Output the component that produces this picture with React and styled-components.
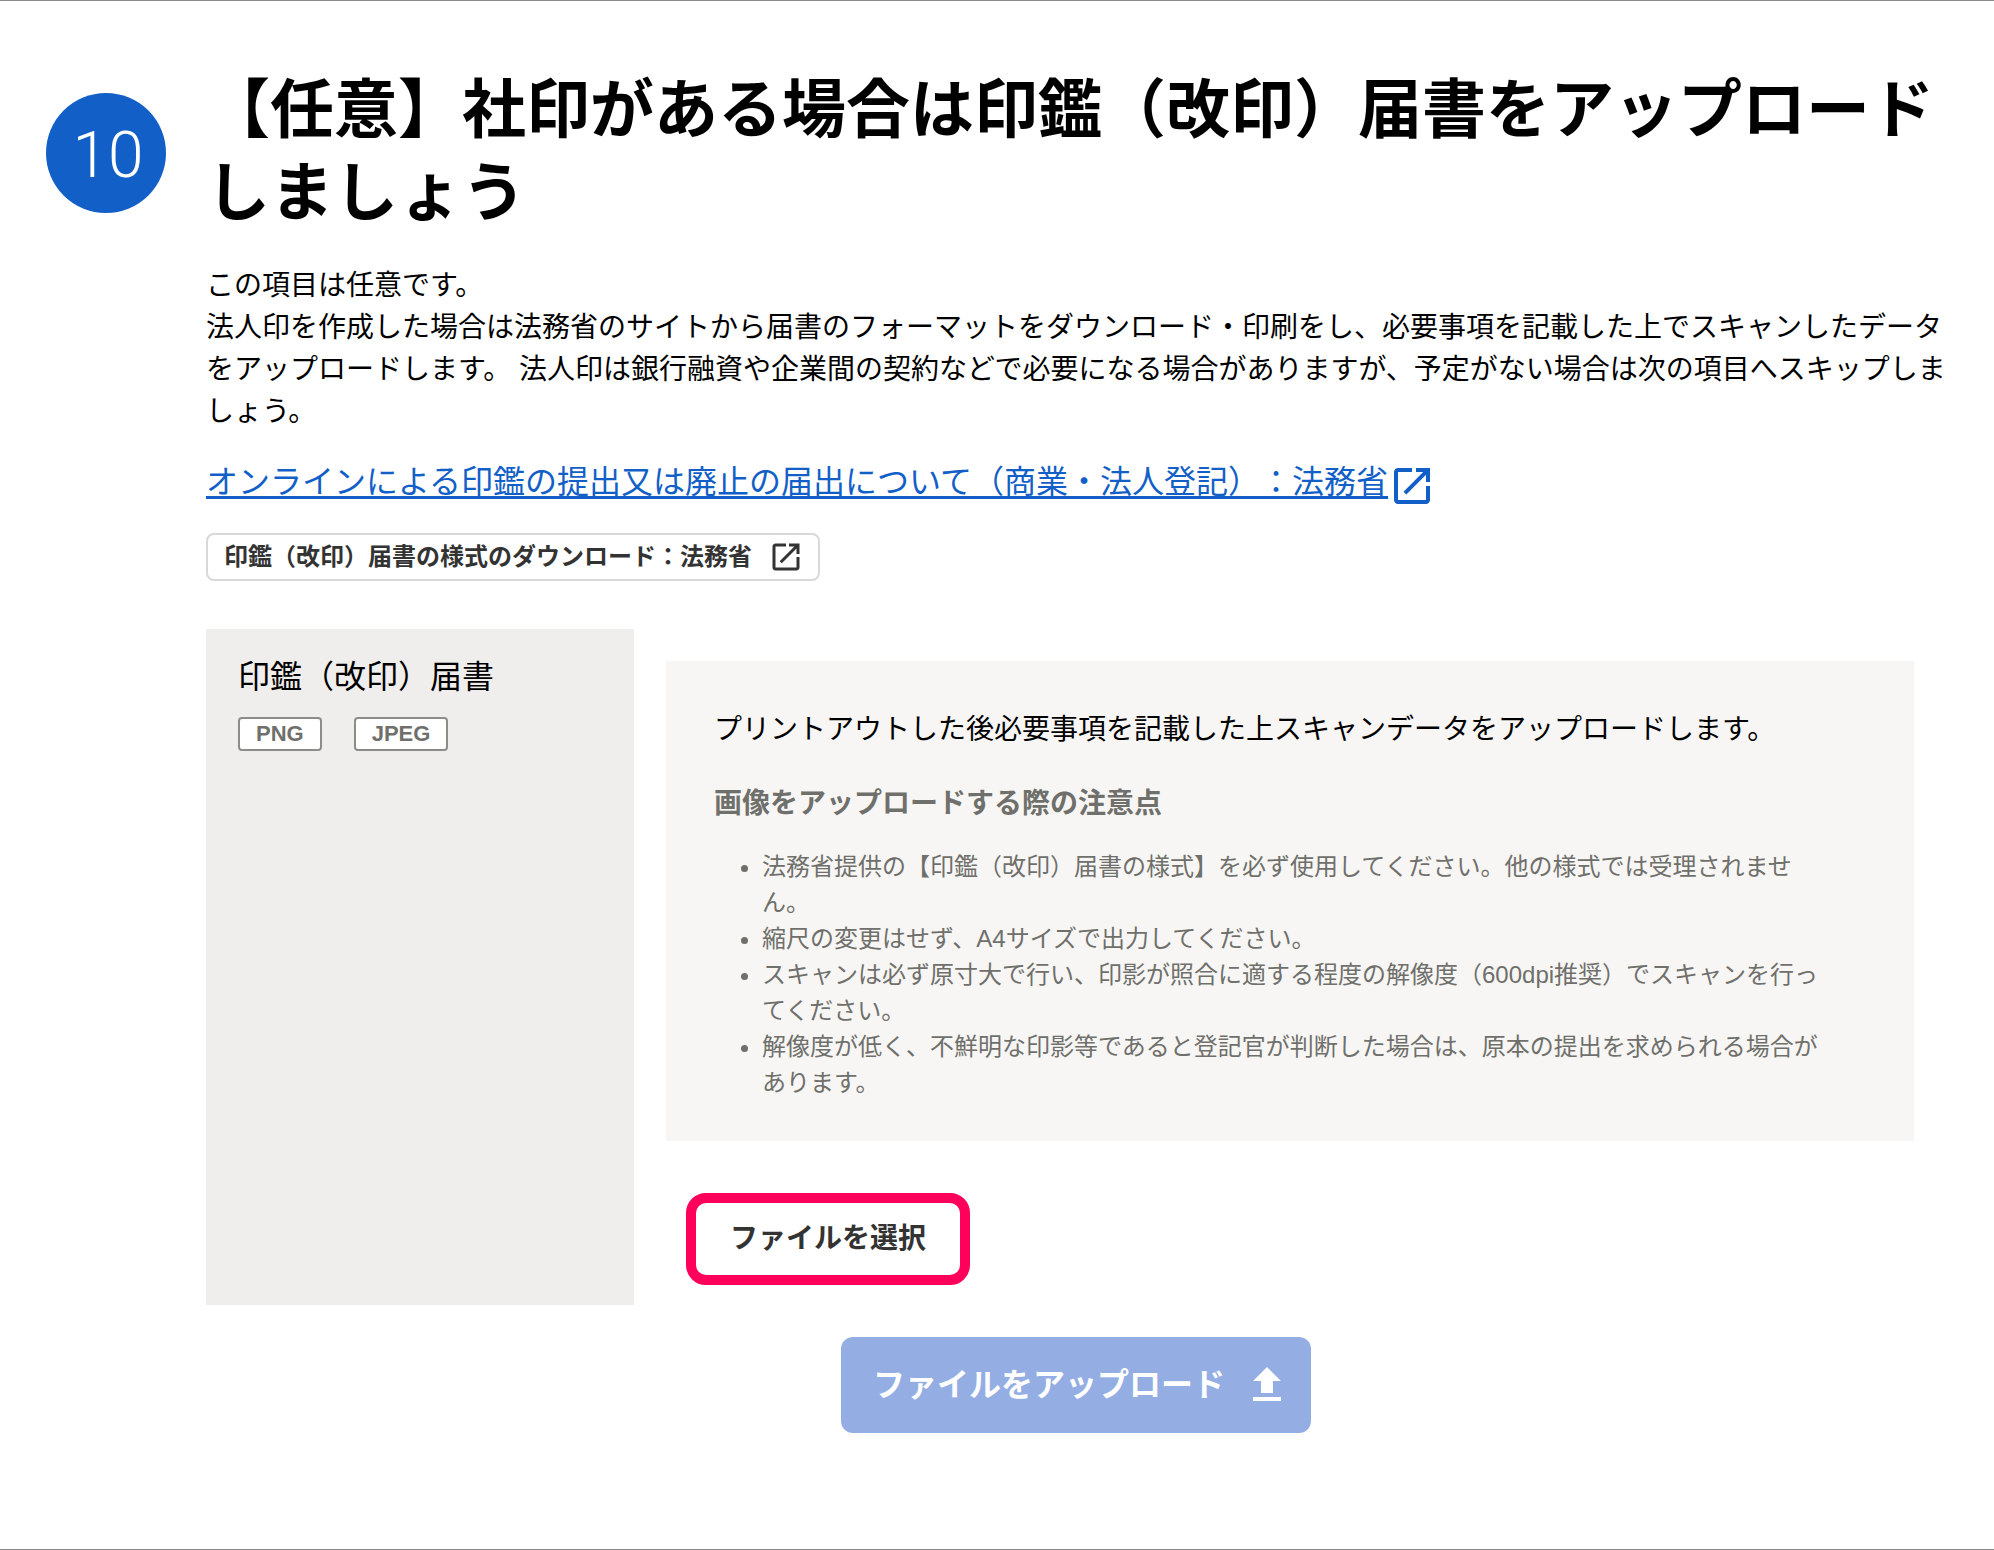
import React, { useRef } from 'react';
import styled, { createGlobalStyle } from 'styled-components';

const color = {
  text: '#000000',
  strong: '#333333',
  muted: '#6f6f6b',
  link: '#135fc8',
  rule: '#8a8a8a',
  outline: '#d9d9d9',
  panel: '#efeeec',
  card: '#f7f6f4',
  focus: '#ff005a',
  disabled: '#94aee4',
};

const GlobalStyle = createGlobalStyle`
  * { box-sizing: border-box; }
  body {
    margin: 0;
    background: #ffffff;
    color: ${color.text};
    font-family: "Liberation Sans", "Noto Sans CJK JP", sans-serif;
    font-size: 28px;
    line-height: 42px;
    text-spacing-trim: space-all;
  }
`;

const Step = styled.section`
  display: flex;
  align-items: flex-start;
  gap: 40px;
  padding: 68px 48px 116px 46px;
  border-top: 1px solid ${color.rule};
  border-bottom: 1px solid ${color.rule};
`;

const StepNumber = styled.span`
  flex: none;
  display: flex;
  align-items: center;
  justify-content: center;
  width: 120px;
  height: 120px;
  margin-top: 24px;
  padding: 6px 0 0 4px;
  border-radius: 50%;
  background: ${color.link};
  color: #ffffff;
  font-family: Roboto, sans-serif;
  font-size: 64px;
  font-weight: 300;
`;

const StepBody = styled.div`
  flex: 1;
  min-width: 0;
`;

const Title = styled.h2`
  margin: 0 0 30px;
  font-size: 64px;
  line-height: 83px;
`;

const Lead = styled.p`
  margin: 0;
`;

const Links = styled.div`
  display: flex;
  flex-direction: column;
  align-items: flex-start;
  gap: 27px;
  margin: 25px 0 48px;
`;

const TextLink = styled.a`
  display: flex;
  align-items: flex-end;
  gap: 4px;
  color: ${color.link};
  font-size: 32px;
  line-height: 48px;
  text-decoration: none;

  span {
    text-decoration: underline;
    text-decoration-thickness: 3px;
    text-decoration-skip-ink: none;
    text-underline-offset: 3px;
  }
`;

const DownloadLink = styled.a`
  display: flex;
  align-items: center;
  gap: 16px;
  height: 48px;
  padding: 0 14px 0 16px;
  border: 2px solid ${color.outline};
  border-radius: 8px;
  background: #ffffff;
  color: ${color.strong};
  font-size: 24px;
  font-weight: 700;
  text-decoration: none;
`;

const Document = styled.div`
  display: grid;
  grid-template-columns: 428px 1fr;
  gap: 32px;
`;

const DocumentInfo = styled.div`
  padding: 24px 32px;
  background: ${color.panel};
`;

const DocumentName = styled.h3`
  margin: 0 0 16px;
  font-size: 32px;
  font-weight: 400;
  line-height: 48px;
`;

const Formats = styled.ul`
  display: flex;
  gap: 32px;
  margin: 0;
  padding: 0;
  list-style: none;
`;

const Format = styled.li`
  padding: 0 16px;
  border: 2px solid #8c8c88;
  border-radius: 4px;
  background: #ffffff;
  color: ${color.muted};
  font-size: 22px;
  font-weight: 700;
  line-height: 30px;
`;

const DocumentMain = styled.div`
  padding: 32px 32px 20px 0;
`;

const Guide = styled.div`
  padding: 48px 48px 40px;
  background: ${color.card};
`;

const GuideTitle = styled.h4`
  margin: 32px 0 24px;
  color: ${color.muted};
  font-size: 28px;
`;

const Notes = styled.ul`
  margin: 0;
  padding: 0 40px 0 48px;
  color: ${color.muted};
  font-size: 24px;
  line-height: 36px;
`;

const SelectButton = styled.button`
  display: block;
  height: 92px;
  margin: 52px 0 0 20px;
  padding: 0 34px;
  border: 10px solid ${color.focus};
  border-radius: 20px;
  background: #ffffff;
  color: ${color.strong};
  font: inherit;
  font-weight: 700;
`;

const FileInput = styled.input`
  display: none;
`;

const Actions = styled.div`
  display: flex;
  justify-content: center;
  margin-top: 32px;
`;

const UploadButton = styled.button`
  display: flex;
  align-items: center;
  gap: 18px;
  height: 96px;
  padding: 0 20px 0 32px;
  border: 0;
  border-radius: 12px;
  background: ${color.disabled};
  color: #ffffff;
  font: inherit;
  font-size: 32px;
  font-weight: 700;
`;

const Icon = styled.svg`
  flex: none;
  display: block;
  width: ${(p) => p.$size}px;
  height: ${(p) => p.$size}px;
  fill: currentColor;
`;

const OpenInNew = ({ size, viewBox }) => (
  <Icon $size={size} viewBox={viewBox} aria-hidden="true">
    <path d="M19 19H5V5h7V3H5c-1.11 0-2 .9-2 2v14c0 1.1.89 2 2 2h14c1.1 0 2-.9 2-2v-7h-2v7zM14 3v2h3.59l-9.83 9.83 1.41 1.41L19 6.41V10h2V3h-7z" />
  </Icon>
);

const notes = [
  '法務省提供の【印鑑（改印）届書の様式】を必ず使用してください。他の様式では受理されません。',
  '縮尺の変更はせず、A4サイズで出力してください。',
  'スキャンは必ず原寸大で行い、印影が照合に適する程度の解像度（600dpi推奨）でスキャンを行ってください。',
  '解像度が低く、不鮮明な印影等であると登記官が判断した場合は、原本の提出を求められる場合があります。',
];

export default function App() {
  const fileInput = useRef(null);

  return (
    <main lang="ja">
      <GlobalStyle />
      <Step>
        <StepNumber>10</StepNumber>
        <StepBody>
          <Title>【任意】社印がある場合は印鑑（改印）届書をアップロードしましょう</Title>
          <Lead>
            この項目は任意です。
            <br />
            法人印を作成した場合は法務省のサイトから届書のフォーマットをダウンロード・印刷をし、必要事項を記載した上でスキャンしたデータをアップロードします。 法人印は銀行融資や企業間の契約などで必要になる場合がありますが、予定がない場合は次の項目へスキップしましょう。
          </Lead>

          <Links>
            <TextLink href="#about">
              <span>オンラインによる印鑑の提出又は廃止の届出について（商業・法人登記）：法務省</span>
              <OpenInNew size={40} viewBox="2 2 20 20" />
            </TextLink>
            <DownloadLink href="#download">
              印鑑（改印）届書の様式のダウンロード：法務省
              <OpenInNew size={36} viewBox="0 0 24 24" />
            </DownloadLink>
          </Links>

          <Document>
            <DocumentInfo>
              <DocumentName>印鑑（改印）届書</DocumentName>
              <Formats>
                <Format>PNG</Format>
                <Format>JPEG</Format>
              </Formats>
            </DocumentInfo>
            <DocumentMain>
              <Guide>
                <Lead>プリントアウトした後必要事項を記載した上スキャンデータをアップロードします。</Lead>
                <GuideTitle>画像をアップロードする際の注意点</GuideTitle>
                <Notes>
                  {notes.map((note) => (
                    <li key={note}>{note}</li>
                  ))}
                </Notes>
              </Guide>
              <FileInput
                ref={fileInput}
                type="file"
                accept="image/png,image/jpeg"
                aria-label="ファイルを選択"
              />
              <SelectButton type="button" onClick={() => fileInput.current.click()}>
                ファイルを選択
              </SelectButton>
            </DocumentMain>
          </Document>

          <Actions>
            <UploadButton type="button" disabled>
              ファイルをアップロード
              <Icon $size={48} viewBox="0 0 24 24" aria-hidden="true">
                <path d="M9 16h6v-6h4l-7-7-7 7h4v6zM5 18h14v2H5v-2z" />
              </Icon>
            </UploadButton>
          </Actions>
        </StepBody>
      </Step>
    </main>
  );
}
